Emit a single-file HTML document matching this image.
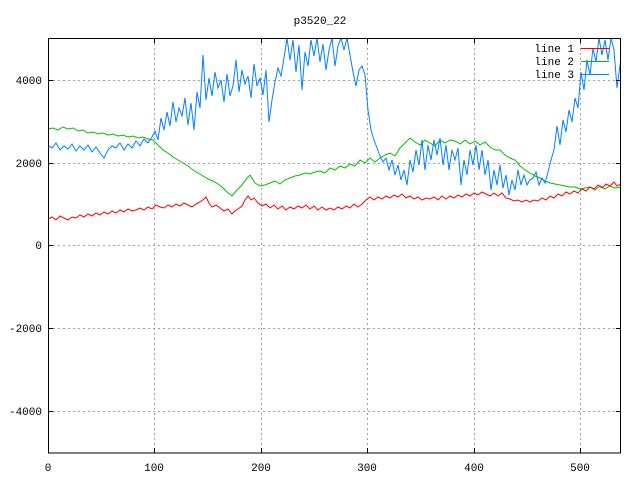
<!DOCTYPE html>
<html><head><style>
body{margin:0;background:#fff;}
svg text{font-family:"Liberation Mono","DejaVu Sans Mono",monospace;font-size:11px;fill:#000;}
</style></head><body>
<svg width="640" height="480" xmlns="http://www.w3.org/2000/svg">
<rect width="640" height="480" fill="#fff"/>
<g stroke="#a0a0a0" stroke-dasharray="2,3" stroke-width="1">
<line x1="48" y1="80.5" x2="621" y2="80.5"/>
<line x1="48" y1="163.5" x2="621" y2="163.5"/>
<line x1="48" y1="245.5" x2="621" y2="245.5"/>
<line x1="48" y1="328.5" x2="621" y2="328.5"/>
<line x1="48" y1="411.5" x2="621" y2="411.5"/>
<line x1="154.5" y1="38" x2="154.5" y2="453"/>
<line x1="261.5" y1="38" x2="261.5" y2="453"/>
<line x1="367.5" y1="38" x2="367.5" y2="453"/>
<line x1="474.5" y1="38" x2="474.5" y2="453"/>
<line x1="580.5" y1="38" x2="580.5" y2="453"/>
</g>
<text x="320" y="24" text-anchor="middle">p3520_22</text>
<g text-anchor="end">
<text x="42" y="84">4000</text>
<text x="42" y="167">2000</text>
<text x="42" y="249">0</text>
<text x="42" y="332">-2000</text>
<text x="42" y="415">-4000</text>
</g>
<g text-anchor="middle">
<text x="48" y="471">0</text>
<text x="154" y="471">100</text>
<text x="261" y="471">200</text>
<text x="367" y="471">300</text>
<text x="474" y="471">400</text>
<text x="580" y="471">500</text>
</g>
<defs><clipPath id="c"><rect x="48" y="38" width="573" height="415"/></clipPath></defs>
<g clip-path="url(#c)" fill="none" stroke-width="1">
<polyline stroke="#00c000" points="48,129 53,128 58,130 63,127 68,129 73,128 78,131 83,130 88,133 93,132 98,134 103,133 108,135 113,134 118,136 123,135 128,137 133,136 138,138 143,137 148,139 153,140 158,145 163,150 168,153 173,157 178,160 183,163 188,166 193,170 198,173 203,176 208,179 213,181 218,184 223,188 228,193 232,196 237,190 242,185 247,178 250,175 255,183 260,186 265,185 270,183 275,181 280,184 285,180 290,178 295,176 300,175 305,173 310,174 315,172 320,171 325,173 330,168 335,170 340,166 345,168 350,164 355,166 360,160 365,163 370,158 375,162 380,158 385,155 390,153 395,156 400,148 405,143 410,138 415,142 420,145 425,140 430,143 435,146 440,140 445,143 450,140 455,141 460,144 465,140 470,144 475,141 480,145 485,142 490,147 495,150 500,150 505,155 510,158 515,160 520,166 525,170 530,173 535,176 540,178 545,181 550,183 555,184 560,185 565,186 570,187 575,187 580,189 585,188 590,187 595,190 600,186 605,189 610,186 615,188 621,187"/>
<polyline stroke="#ff0000" points="48,219 52,217 56,220 60,216 64,218 68,220 72,217 76,218 80,215 84,217 88,214 92,216 96,213 100,215 104,212 108,214 112,211 116,213 120,210 124,212 128,209 132,211 136,210 140,208 144,210 148,207 152,209 156,205 160,207 164,208 168,205 172,207 176,204 180,206 184,203 188,205 192,207 196,204 200,202 204,199 206,197 209,203 212,207 216,205 220,208 224,211 228,209 232,214 235,211 238,209 242,206 245,200 248,196 251,200 254,198 258,203 262,206 266,204 270,208 274,205 278,209 282,206 286,210 290,207 294,209 298,206 302,208 306,205 310,209 314,206 318,210 322,207 326,210 330,208 334,210 338,207 342,209 346,206 350,208 354,204 358,207 362,204 366,200 370,197 374,200 378,197 382,199 386,196 390,198 394,195 398,197 402,194 406,198 410,196 414,199 418,197 422,200 426,198 430,199 434,197 438,200 442,196 446,199 450,196 454,198 458,195 462,197 466,194 470,196 474,193 478,195 482,192 486,194 490,196 494,193 498,196 502,193 506,198 510,199 514,201 518,200 522,202 526,200 530,202 534,200 538,201 542,198 546,200 550,196 554,198 558,194 562,196 566,192 570,194 574,191 578,193 582,189 586,191 590,187 594,189 598,185 602,188 606,184 610,186 614,182 617,186 621,184"/>
<polyline stroke="#0080ff" points="48,145 52,148 56,143 60,150 64,146 68,149 72,144 76,151 80,146 84,150 88,145 92,152 96,147 100,153 104,158 108,150 112,146 116,148 120,143 124,150 128,144 132,148 136,141 140,146 144,139 148,143 152,137 155,131 158,140 161,118 164,130 167,112 170,126 173,102 176,122 179,108 182,116 185,98 188,125 191,103 194,130 197,92 200,108 203,55 206,100 209,78 212,96 215,72 218,88 221,80 224,102 227,74 230,96 233,86 236,60 239,92 242,70 245,84 248,76 251,98 254,64 257,86 260,78 263,95 266,70 269,122 272,100 275,82 278,68 281,76 284,58 287,38 290,60 293,40 296,72 299,45 302,90 305,52 308,66 311,40 314,56 317,38 320,62 323,44 326,70 329,50 332,38 335,66 338,46 341,38 344,50 347,38 350,55 353,72 356,86 359,70 362,66 365,75 368,110 371,130 374,140 377,148 380,156 383,162 386,158 389,170 392,160 395,175 398,165 401,180 404,170 407,185 410,160 413,172 416,150 419,165 422,140 425,170 428,145 431,160 434,140 437,155 440,138 443,165 446,145 449,170 452,150 455,160 458,148 461,185 464,160 467,175 470,150 473,165 476,145 479,170 482,150 485,175 488,160 491,190 494,170 497,185 500,165 503,188 506,175 509,195 512,180 515,190 518,170 521,185 524,175 527,185 530,180 533,178 536,172 539,185 542,178 545,183 548,172 551,160 554,150 557,126 560,145 563,120 566,132 569,110 572,122 575,98 578,108 581,72 584,90 587,60 590,75 593,48 596,62 599,38 602,55 605,40 608,60 611,38 614,50 617,88 621,58"/>
</g>
<g text-anchor="end">
<text x="574" y="52">line 1</text>
<text x="574" y="65">line 2</text>
<text x="574" y="78">line 3</text>
</g>
<line x1="581" y1="48.5" x2="609" y2="48.5" stroke="#ff0000"/>
<line x1="581" y1="61.5" x2="609" y2="61.5" stroke="#00c000"/>
<line x1="581" y1="74.5" x2="609" y2="74.5" stroke="#0080ff"/>
<rect x="48.5" y="38.5" width="572" height="414.5" fill="none" stroke="#000"/>
<g stroke="#000">
<line x1="154.5" y1="448" x2="154.5" y2="453"/><line x1="261.5" y1="448" x2="261.5" y2="453"/><line x1="367.5" y1="448" x2="367.5" y2="453"/><line x1="474.5" y1="448" x2="474.5" y2="453"/><line x1="580.5" y1="448" x2="580.5" y2="453"/>
<line x1="154.5" y1="38" x2="154.5" y2="43"/><line x1="261.5" y1="38" x2="261.5" y2="43"/><line x1="367.5" y1="38" x2="367.5" y2="43"/><line x1="474.5" y1="38" x2="474.5" y2="43"/><line x1="580.5" y1="38" x2="580.5" y2="43"/>
<line x1="48" y1="80.5" x2="53" y2="80.5"/><line x1="48" y1="163.5" x2="53" y2="163.5"/><line x1="48" y1="245.5" x2="53" y2="245.5"/><line x1="48" y1="328.5" x2="53" y2="328.5"/><line x1="48" y1="411.5" x2="53" y2="411.5"/>
<line x1="616" y1="80.5" x2="621" y2="80.5"/><line x1="616" y1="163.5" x2="621" y2="163.5"/><line x1="616" y1="245.5" x2="621" y2="245.5"/><line x1="616" y1="328.5" x2="621" y2="328.5"/><line x1="616" y1="411.5" x2="621" y2="411.5"/>
</g>
</svg>
</body></html>
